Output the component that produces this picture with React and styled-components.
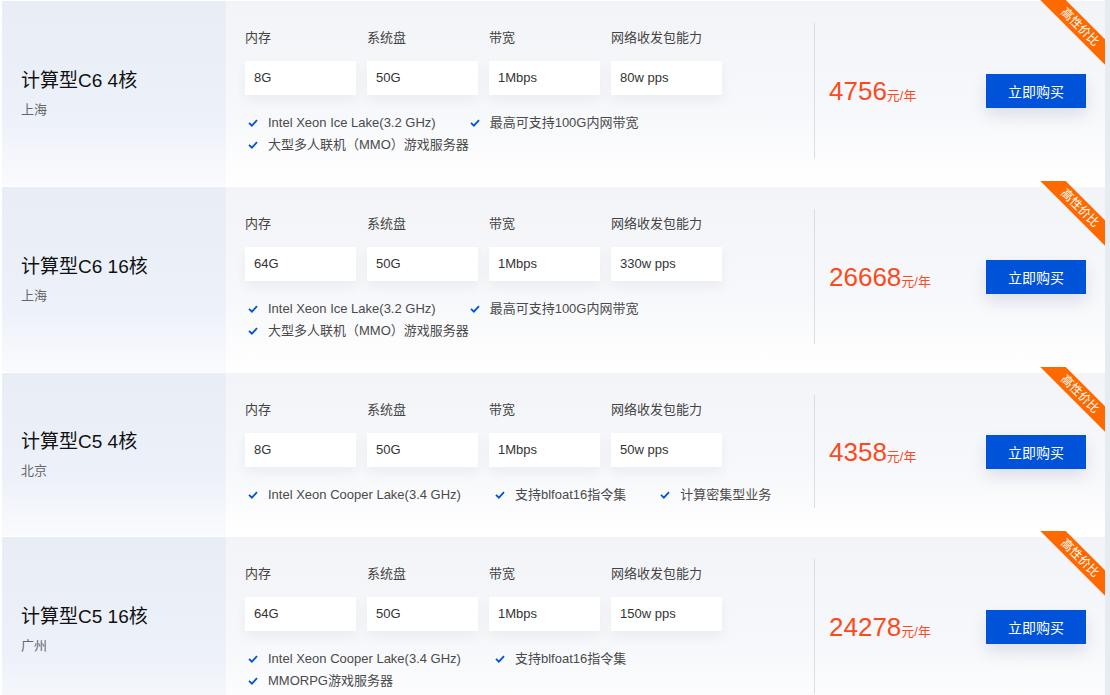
import React from "react";
import styled, { createGlobalStyle } from "styled-components";

const GlobalStyle = createGlobalStyle`
  html, body {
    margin: 0;
    padding: 0;
    background: #ffffff;
    font-family: "Liberation Sans", "Noto Sans CJK SC", sans-serif;
    overflow: hidden;
  }
  * { box-sizing: border-box; }
`;

const Page = styled.div`
  display: flex;
  width: 1110px;
  min-height: 695px;
`;

const List = styled.div`
  flex: 1;
  display: flex;
  flex-direction: column;
  gap: 1px;
  padding: 1px 0 0 2px;
`;

const Strip = styled.div`
  width: 5px;
  background: #e7ebf2;
`;

const Card = styled.div`
  position: relative;
  display: flex;
`;

const Side = styled.div`
  width: 224px;
  flex-shrink: 0;
  display: flex;
  flex-direction: column;
  justify-content: center;
  padding-left: 19px;
  background: linear-gradient(180deg, #e8edf6 0%, #edf1f9 65%, #fafbfe 100%);
`;

const Title = styled.div`
  font-size: 19px;
  line-height: 24px;
  color: #111;
`;

const Region = styled.div`
  margin-top: 8px;
  font-size: 13px;
  line-height: 18px;
  color: #666;
`;

const Body = styled.div`
  flex: 1;
  display: flex;
  background: linear-gradient(180deg, #f2f4f8 0%, #f7f8fb 60%, #ffffff 100%);
`;

const Specs = styled.div`
  flex: 1;
  padding: 27px 14px 30px 19px;
`;

const SpecGrid = styled.div`
  display: grid;
  grid-template-columns: repeat(4, 111px);
  column-gap: 11px;
`;

const Spec = styled.div`
  display: flex;
  flex-direction: column;
  gap: 13px;
`;

const Label = styled.div`
  font-size: 13px;
  line-height: 20px;
  color: #444;
`;

const Value = styled.div`
  height: 34px;
  line-height: 34px;
  padding-left: 9px;
  background: #ffffff;
  font-size: 13px;
  color: #333;
  box-shadow: 0 6px 12px rgba(40, 60, 110, 0.06);
`;

const Features = styled.div`
  display: flex;
  flex-wrap: wrap;
  column-gap: 34px;
  margin-top: 17px;
  padding-left: 3px;
`;

const Feature = styled.div`
  display: flex;
  align-items: center;
  gap: 10px;
  font-size: 13px;
  line-height: 22px;
  color: #4a4a4a;
  white-space: nowrap;
`;

const PriceArea = styled.div`
  width: 291px;
  flex-shrink: 0;
  margin: 22px 0 28px;
  border-left: 1px solid #dcdde0;
  display: flex;
  align-items: center;
  justify-content: space-between;
  padding: 0 19px 0 14px;
`;

const Price = styled.div`
  color: #fc4a1d;
  display: flex;
  align-items: baseline;
`;

const Amount = styled.span`
  font-size: 26px;
  line-height: 30px;
`;

const Unit = styled.span`
  font-size: 13px;
`;

const BuyButton = styled.button`
  width: 100px;
  height: 34px;
  border: none;
  border-radius: 0;
  background: #0052d9;
  color: #ffffff;
  font-family: inherit;
  font-size: 14px;
  cursor: pointer;
  box-shadow: 0 8px 16px rgba(40, 60, 110, 0.12);
`;

const Ribbon = styled.div`
  position: absolute;
  top: ${(p) => (p.$first ? "-1px" : "-6px")};
  right: 0;
  width: 65px;
  height: 65px;
  overflow: hidden;
  pointer-events: none;
`;

const Band = styled.div`
  position: absolute;
  left: -10px;
  top: 18px;
  width: 100px;
  height: 18px;
  line-height: 18px;
  background: #ff6a00;
  color: #ffffff;
  font-size: 12px;
  text-align: center;
  transform: rotate(45deg);
`;

const Check = () => (
  <svg width="10" height="8" viewBox="0 0 10 8" fill="none">
    <path d="M1 3.8 L3.9 6.6 L9 1.2" stroke="#0052d9" strokeWidth="1.8" />
  </svg>
);

const products = [
  {
    title: "计算型C6 4核",
    region: "上海",
    specs: ["8G", "50G", "1Mbps", "80w pps"],
    features: ["Intel Xeon Ice Lake(3.2 GHz)", "最高可支持100G内网带宽", "大型多人联机（MMO）游戏服务器"],
    price: "4756",
  },
  {
    title: "计算型C6 16核",
    region: "上海",
    specs: ["64G", "50G", "1Mbps", "330w pps"],
    features: ["Intel Xeon Ice Lake(3.2 GHz)", "最高可支持100G内网带宽", "大型多人联机（MMO）游戏服务器"],
    price: "26668",
  },
  {
    title: "计算型C5 4核",
    region: "北京",
    specs: ["8G", "50G", "1Mbps", "50w pps"],
    features: ["Intel Xeon Cooper Lake(3.4 GHz)", "支持blfoat16指令集", "计算密集型业务"],
    price: "4358",
  },
  {
    title: "计算型C5 16核",
    region: "广州",
    specs: ["64G", "50G", "1Mbps", "150w pps"],
    features: ["Intel Xeon Cooper Lake(3.4 GHz)", "支持blfoat16指令集", "MMORPG游戏服务器"],
    price: "24278",
  },
];

const labels = ["内存", "系统盘", "带宽", "网络收发包能力"];

export default function App() {
  return (
    <>
      <GlobalStyle />
      <Page>
        <List>
          {products.map((p, idx) => (
            <Card key={p.title}>
              <Side>
                <Title>{p.title}</Title>
                <Region>{p.region}</Region>
              </Side>
              <Body>
                <Specs>
                  <SpecGrid>
                    {labels.map((l, i) => (
                      <Spec key={l}>
                        <Label>{l}</Label>
                        <Value>{p.specs[i]}</Value>
                      </Spec>
                    ))}
                  </SpecGrid>
                  <Features>
                    {p.features.map((f) => (
                      <Feature key={f}>
                        <Check />
                        {f}
                      </Feature>
                    ))}
                  </Features>
                </Specs>
                <PriceArea>
                  <Price>
                    <Amount>{p.price}</Amount>
                    <Unit>元/年</Unit>
                  </Price>
                  <BuyButton>立即购买</BuyButton>
                </PriceArea>
              </Body>
              <Ribbon $first={idx === 0}>
                <Band>高性价比</Band>
              </Ribbon>
            </Card>
          ))}
        </List>
        <Strip />
      </Page>
    </>
  );
}
